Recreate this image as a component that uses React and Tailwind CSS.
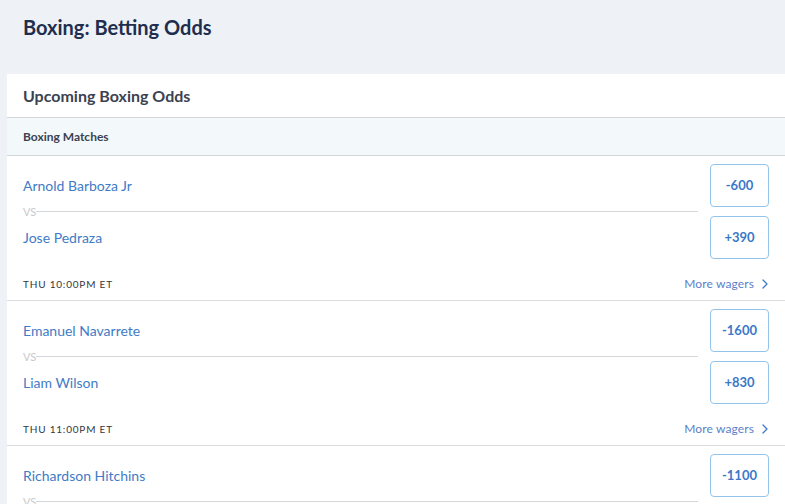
const MATCHES = [
  { a: 'Arnold Barboza Jr', b: 'Jose Pedraza', oa: '-600', ob: '+390', time: 'THU 10:00PM ET' },
  { a: 'Emanuel Navarrete', b: 'Liam Wilson', oa: '-1600', ob: '+830', time: 'THU 11:00PM ET' },
  { a: 'Richardson Hitchins', b: 'Gustavo Lemos', oa: '-1100', ob: '+650', time: 'FRI 9:00PM ET' },
];

function OddsButton({ value }) {
  return (
    <button className="flex h-[43px] w-[59px] items-center justify-center rounded-[4px] border border-[#93c5ec] bg-white text-[13px] font-bold text-[#3b78c9]">
      {value}
    </button>
  );
}

function MatchRow({ m }) {
  return (
    <div className="border-b border-[#dcdde0] px-4 pt-[8px]">
      <div className="flex items-stretch gap-3">
        <div className="flex flex-1 flex-col">
          <div className="flex h-[43px] items-center text-[14px] text-[#3f7bc6]">{m.a}</div>
          <div className="flex h-[9px] items-center">
            <span className="text-[11px] leading-none text-[#c8c9cc]">VS</span>
            <div className="h-px flex-1 bg-[#d6d7da]" />
          </div>
          <div className="flex h-[43px] items-center text-[14px] text-[#3f7bc6]">{m.b}</div>
        </div>
        <div className="flex flex-col gap-[9px]">
          <OddsButton value={m.oa} />
          <OddsButton value={m.ob} />
        </div>
      </div>
      <div className="flex items-center justify-between pt-[18px] pb-[9px] leading-[14px]">
        <span className="text-[10px] tracking-[0.08em] text-[#333840]">{m.time}</span>
        <span className="flex items-center gap-[8px] text-[12px] tracking-[0.01em] text-[#5b80c9]">
          More wagers
          <svg width="6" height="10" viewBox="0 0 6 10" fill="none" className="mr-[1px]">
            <path d="M1 1l4 4-4 4" stroke="#3f7bc6" strokeWidth="1.3" strokeLinecap="round" strokeLinejoin="round" />
          </svg>
        </span>
      </div>
    </div>
  );
}

export default function App() {
  return (
    <div className="min-h-screen overflow-hidden bg-[#eef2f7] pl-[7px]" style={{ fontFamily: 'Lato, "Open Sans", sans-serif' }}>
      <h1 className="flex h-[74px] items-start pl-4 pt-[12px] text-[20px] font-bold text-[#1f2e4e]">
        Boxing: Betting Odds
      </h1>
      <div className="bg-white">
        <div className="flex h-[44px] items-center border-b border-[#d3d5d9] px-4 text-[16px] font-bold text-[#3b4250]">
          Upcoming Boxing Odds
        </div>
        <div className="flex h-[38px] items-center border-b border-[#d3d5d9] bg-[#f3f8fb] px-4 text-[12px] font-bold text-[#3b4250]">
          Boxing Matches
        </div>
        {MATCHES.map((m) => (
          <MatchRow key={m.a} m={m} />
        ))}
      </div>
    </div>
  );
}
